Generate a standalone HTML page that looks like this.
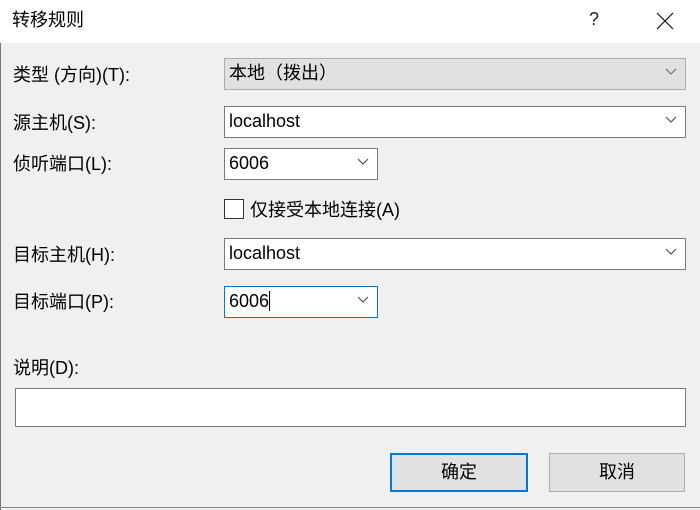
<!DOCTYPE html>
<html><head><meta charset="utf-8"><style>
*{margin:0;padding:0;box-sizing:border-box}
body{width:700px;height:510px;background:#f0f0f0;font-family:"Liberation Sans","Noto Sans CJK SC",sans-serif;font-size:18px;color:#000;position:relative;overflow:hidden}
.a{position:absolute}
.title{left:0;top:0;width:700px;height:43px;background:#fff}
.lb{position:absolute;left:13px;line-height:20px}
.box{position:absolute;background:#fff;border:1px solid #7a7a7a;line-height:29px;padding-left:4px}
.chev{position:absolute;right:8px;top:9px;width:12px;height:8px}
.btn{position:absolute;background:#e1e1e1;border:1px solid #adadad;text-align:center;line-height:36px}
</style></head><body>
<div class="a" style="left:0;top:0;width:1px;height:510px;background:#777"></div>
<div class="a" style="left:0;top:507px;width:700px;height:1px;background:#888"></div>
<div class="a title"></div>
<div class="a" style="left:12px;top:10px;line-height:20px">转移规则</div>
<div class="a" style="left:589px;top:9px;font-size:18px;color:#222">?</div>
<svg class="a" style="left:656px;top:12px" width="18" height="18"><path d="M1 1L17 17M17 1L1 17" stroke="#111" stroke-width="1.2"/></svg>

<div class="lb" style="top:65px">类型 (方向)(T):</div>
<div class="lb" style="top:113px">源主机(S):</div>
<div class="lb" style="top:154px">侦听端口(L):</div>
<div class="lb" style="top:245px">目标主机(H):</div>
<div class="lb" style="top:292px">目标端口(P):</div>
<div class="lb" style="top:358px">说明(D):</div>

<div class="box" style="left:224px;top:58px;width:462px;height:32px;background:#e1e1e1;border-color:#adadad">本地（拨出）<svg class="chev" viewBox="0 0 12 8"><path d="M1 1L6 6L11 1" stroke="#666" fill="none"/></svg></div>
<div class="box" style="left:224px;top:106px;width:462px;height:32px">localhost<svg class="chev" viewBox="0 0 12 8"><path d="M1 1L6 6L11 1" stroke="#444" fill="none"/></svg></div>
<div class="box" style="left:224px;top:148px;width:154px;height:32px">6006<svg class="chev" viewBox="0 0 12 8"><path d="M1 1L6 6L11 1" stroke="#444" fill="none"/></svg></div>
<div class="a" style="left:224px;top:199px;width:20px;height:20px;border:1px solid #333;background:#fff"></div>
<div class="a" style="left:250px;top:199px;line-height:22px">仅接受本地连接(A)</div>
<div class="box" style="left:224px;top:238px;width:462px;height:32px">localhost<svg class="chev" viewBox="0 0 12 8"><path d="M1 1L6 6L11 1" stroke="#444" fill="none"/></svg></div>
<div class="box" style="left:224px;top:286px;width:154px;height:32px;border-color:#0078d7">6006<span style="display:inline-block;width:1px;height:20px;background:#000;vertical-align:-4px"></span><svg class="chev" viewBox="0 0 12 8"><path d="M1 1L6 6L11 1" stroke="#444" fill="none"/></svg></div>
<div class="box" style="left:15px;top:388px;width:671px;height:39px"></div>

<div class="btn" style="left:390px;top:453px;width:138px;height:39px;border:2px solid #0078d7;line-height:35px">确定</div>
<div class="btn" style="left:549px;top:453px;width:136px;height:39px">取消</div>
</body></html>
